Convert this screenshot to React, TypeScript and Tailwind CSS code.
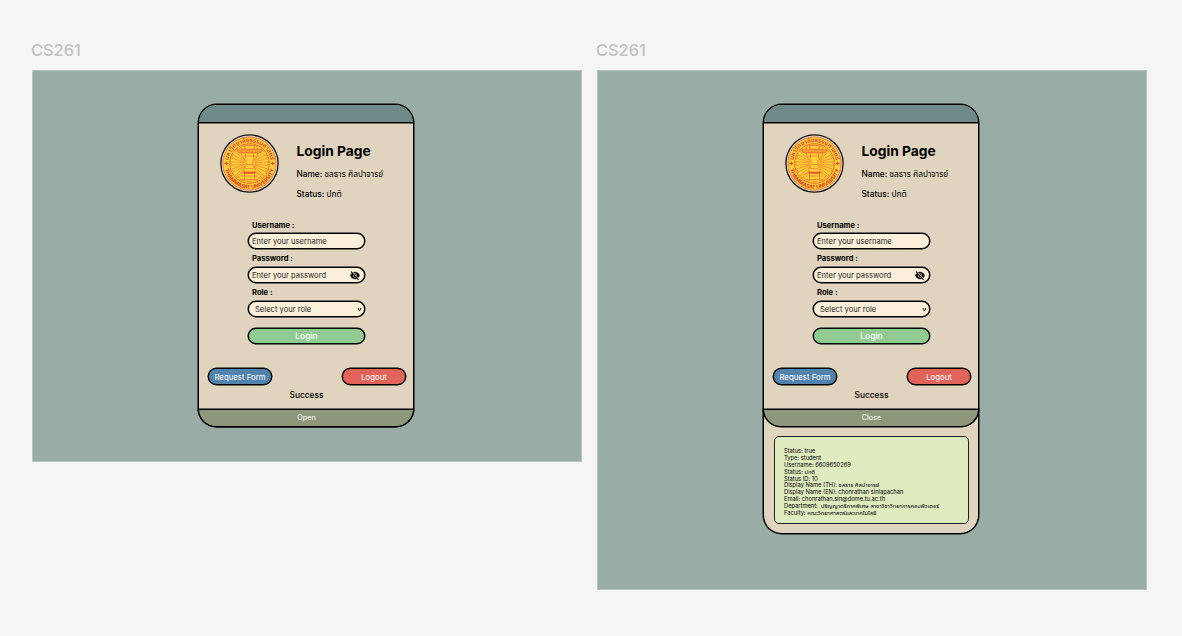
import React from "react";

const rays = Array.from({ length: 16 }, (_, i) => i * 22.5);

function Seal({ id }: { id: string }) {
  return (
    <svg viewBox="-29.5 -29.5 59 59" className="h-[59px] w-[59px] shrink-0">
      <defs>
        <path id={`${id}-top`} d="M-21.4 0A21.400 21.400 0 0 1 21.400 0" />
        <path id={`${id}-bottom`} d="M-25.200 0A25.200 25.200 0 0 0 25.200 0" />
      </defs>
      <circle r="28.600" fill="#efdccb" stroke="#111" strokeWidth="1.300" />
      <circle r="26.600" fill="#ffcf36" stroke="#e65a3c" strokeWidth="0.800" />
      <circle r="19.800" fill="#ffcf36" stroke="#e5502f" strokeWidth="0.800" />
      <g stroke="#ee7433" strokeWidth="0.600" fill="none">
        {rays.map((r) => (
          <path key={r} d="M-.6 -5L-1.800 -18.500H1.800L.6 -5" transform={`rotate(${r})`} />
        ))}
      </g>
      <g fill="#ffcf36" stroke="#e9602f" strokeWidth="0.600">
        <path d="M-5 -18H5L4 -14H-4Z" />
        <path d="M-12.500 -14.300H12.500V-12.500L10.500 -10.500H-10.500L-12.500 -12.500Z" fill="#f49a33" />
        <path d="M-8.500 -10.500H8.500L7 -6.500L3.500 -3V2.500L5.500 5.500V8.500H-5.500V5.500L-3.500 2.500V-3L-7 -6.500Z" />
        <path d="M-4 -10V-5M4 -10V-5M-6 -7.500H6M-3 1H3M-4 5H4" />
        <path d="M-12 12Q-6 7.500 0 9.500Q6 7.500 12 12L8.500 16H-8.500Z" />
        <path d="M-9 12.500H9M-5 10V16M5 10V16" />
        <path d="M-6 9.500H6" stroke="#dc3528" strokeWidth="1.200" />
      </g>
      <path d="M-25.100 0H-21.300M-23.200 -1.900V1.900M21.300 0H25.100M23.200 -1.900V1.900" stroke="#e2442c" strokeWidth="1" />
      <text fill="#d93a2b" fontSize="6" fontWeight="600" fontFamily="Inter, 'Noto Sans Thai', sans-serif">
        <textPath href={`#${id}-top`} startOffset="50%" textAnchor="middle" textLength="60">มหาวิทยาลัยธรรมศาสตร์</textPath>
      </text>
      <text fill="#d93a2b" fontSize="5.300" fontWeight="700" fontFamily="Inter, sans-serif">
        <textPath href={`#${id}-bottom`} startOffset="50%" textAnchor="middle" textLength="67">THAMMASAT UNIVERSITY</textPath>
      </text>
    </svg>
  );
}

function EyeOff() {
  return (
    <svg viewBox="0 0 24 24" preserveAspectRatio="none" className="h-[11px] w-[10px]" fill="#111" stroke="#111" strokeWidth="1">
      <path d="M12 7c2.760 0 5 2.240 5 5 0 .65-.13 1.260-.36 1.830l2.920 2.920c1.510-1.260 2.700-2.890 3.430-4.750-1.730-4.390-6-7.500-11-7.500-1.400 0-2.740.25-3.980.7l2.160 2.160C10.740 7.130 11.350 7 12 7zM2 4.270l2.280 2.280.46.46C3.080 8.300 1.780 10.020 1 12c1.730 4.390 6 7.500 11 7.500 1.550 0 3.030-.3 4.380-.84l.42.42L19.730 22 21 20.730 3.270 3 2 4.270zM7.530 9.800l1.550 1.550c-.05.21-.08.43-.08.65 0 1.660 1.340 3 3 3 .22 0 .44-.03.65-.08l1.550 1.550c-.67.33-1.410.53-2.200.53-2.760 0-5-2.240-5-5 0-.79.2-1.530.53-2.200zm4.310-.78l3.150 3.150.02-.16c0-1.660-1.340-3-3-3l-.17.01z" />
    </svg>
  );
}

const outline = "border border-black shadow-[0_0_0_0.5px_#000]";
const field =
  outline + " flex h-[16px] w-[117px] items-center rounded-full bg-[#faf0da] text-[7.6px] leading-none text-[#282724]";

function LoginCard({ id, action }: { id: string; action: string }) {
  return (
    <div className="flex h-[322px] w-full flex-col">
      <div className="h-[18px] w-full shrink-0 rounded-t-[18px] border-b border-black bg-[#6e8b89] shadow-[0_0.5px_0_#000]" />
      <div className="flex h-[93px] shrink-0 pl-[21px] pt-[11px]">
        <Seal id={id} />
        <div className="ml-[17.5px] flex flex-col whitespace-nowrap pt-[8px]">
          <h1 className="text-[13.8px] font-bold leading-[18px]">Login Page</h1>
          <p className="mt-[7px] text-[8.3px] font-medium leading-[14px]">
            Name: <span className="font-normal">ชลธาร ศิลปาจารย์</span>
          </p>
          <p className="mt-[6px] text-[8.3px] font-medium leading-[14px]">
            Status: <span className="font-normal">ปกติ</span>
          </p>
        </div>
      </div>
      <div className="flex flex-col pl-[49px] text-[7.6px]">
        <label className="mt-[4px] h-[13px] pl-[4px] font-bold leading-[12px]">Username :</label>
        <div className={field + " pl-[3px] pt-[2px]"}>Enter your username</div>
        <label className="mt-[4px] h-[13px] pl-[4px] font-bold leading-[12px]">Password :</label>
        <div className={field + " mt-px justify-between pl-[3px] pr-[4px]"}>
          <span className="pt-px">Enter your password</span>
          <EyeOff />
        </div>
        <label className="mt-[3px] h-[13px] pl-[4px] font-bold leading-[13px]">Role :</label>
        <div className={field + " mt-[2px] justify-between pl-[6px] pr-[2px]"}>
          <span className="pt-px">Select your role</span>
          <svg viewBox="0 0 5 5" className="h-[5px] w-[5px]" fill="none" stroke="#111" strokeWidth="1">
            <path d="M1 1L2.500 4L4 1" />
          </svg>
        </div>
        <button className={outline + " mt-[11px] flex h-[16px] w-[117px] items-center justify-center rounded-full bg-[#90cb91] text-[8.5px] font-medium leading-none text-white"}>
          Login
        </button>
      </div>
      <div className="mt-[24px] flex justify-between pl-[9px] pr-[7px] text-[7.8px] leading-none text-white">
        <button className={outline + " flex h-[17px] w-[64px] items-center justify-center whitespace-nowrap rounded-full bg-[#5283ad] pt-[2px]"}>
          Request Form
        </button>
        <button className={outline + " flex h-[17px] w-[64px] items-center justify-center rounded-full bg-[#e1635a] pt-[2px]"}>
          Logout
        </button>
      </div>
      <p className="mt-[3px] pl-px text-center text-[8.4px] font-medium leading-[14px]">Success</p>
      <div className={outline + " -mx-px mt-auto flex h-[18px] shrink-0 items-center justify-center rounded-b-[18px] bg-[#8e977a] pl-px text-[7.2px] leading-none text-white"}>
        {action}
      </div>
    </div>
  );
}

const details = [
  "Status: true",
  "Type: student",
  "Username: 6609650269",
  "Status: ปกติ",
  "Status ID: 10",
  "Display Name (TH): ชลธาร ศิลปาจารย์",
  "Display Name (EN): chonrathan sinlapachan",
  "Email: chonrathan.sin@dome.tu.ac.th",
  "Department:  ปริญญาตรีภาคพิเศษ สาขาวิชาวิทยาการคอมพิวเตอร์",
  "Faculty: คณะวิทยาศาสตร์และเทคโนโลยี",
];

export default function App() {
  return (
    <main className="flex h-[636px] w-[1182px] gap-[15px] overflow-hidden bg-[#f5f5f5] pl-[32px] pt-[40px] font-[Inter,'Noto_Sans_Thai',sans-serif] text-black">
      <section className="w-[550px]">
        <h2 className="-ml-px h-[30px] text-[16.4px] font-medium leading-[21px] text-[#c2c2c2]">CS261</h2>
        <div className="flex h-[392px] border border-[#b8c5c0] bg-[#99ada6] pl-[165px] pt-[33px]">
          <div className="h-[323px] w-[216px] rounded-[19px] border border-b-0 border-black bg-[#e0d4be] shadow-[0_0_0_0.5px_#000]">
            <LoginCard id="seal-closed" action="Open" />
          </div>
        </div>
      </section>
      <section className="w-[550px]">
        <h2 className="-ml-px h-[30px] text-[16.4px] font-medium leading-[21px] text-[#c2c2c2]">CS261</h2>
        <div className="flex h-[520px] border border-[#b8c5c0] bg-[#99ada6] pl-[165px] pt-[33px]">
          <div className="h-[430px] w-[216px] rounded-[19px] border border-black bg-[#e0d4be] shadow-[0_0_0_0.5px_#000]">
            <LoginCard id="seal-open" action="Close" />
            <div className="ml-[10px] mt-[9px] h-[88px] w-[195px] rounded-[5px] border border-[#222] bg-[#deebbe] pl-[9px] pt-[11px]">
              {details.map((line) => (
                <p key={line} className="h-[6.9px] whitespace-pre text-[5.75px] leading-[6.9px]">
                  {line}
                </p>
              ))}
            </div>
          </div>
        </div>
      </section>
    </main>
  );
}
